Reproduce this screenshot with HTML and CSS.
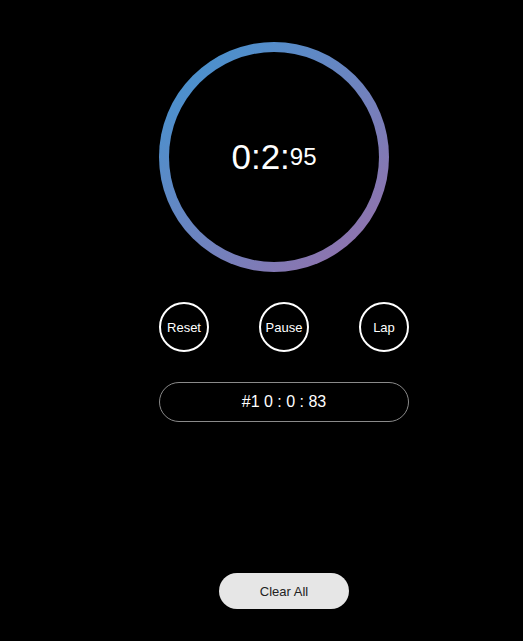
FILE: index.html
```html
<!DOCTYPE html>
<html>
<head>
<meta charset="utf-8">
<link rel="stylesheet" href="styles.css">
</head>
<body>
<div class="app">
  <div class="ring">
    <div class="dial">
      <span class="main">0:2:</span><span class="ms">95</span>
    </div>
  </div>
  <div class="controls">
    <button class="round">Reset</button>
    <button class="round">Pause</button>
    <button class="round">Lap</button>
  </div>
  <ul class="laps">
    <li class="lap">#1 0 : 0 : 83</li>
  </ul>
  <div class="footer">
    <button class="clear">Clear All</button>
  </div>
</div>
</body>
</html>
```
FILE: styles.css
```css
html, body {
  margin: 0;
  padding: 0;
  background: #000;
  height: 100%;
}
body {
  font-family: "Liberation Sans", Arial, sans-serif;
  color: #fff;
}
.app {
  width: 250px;
  margin-left: 159px;
  padding-top: 42px;
  display: flex;
  flex-direction: column;
}
.ring {
  width: 230px;
  height: 230px;
  border-radius: 50%;
  background: linear-gradient(135deg, #3f95d2 0%, #6b84c0 50%, #9a6ea8 100%);
  padding: 10px;
  box-sizing: border-box;
}
.dial {
  width: 100%;
  height: 100%;
  border-radius: 50%;
  background: #000;
  display: flex;
  align-items: center;
  justify-content: center;
  box-sizing: border-box;
}
.main {
  font-size: 35px;
}
.ms {
  font-size: 24px;
}
.controls {
  display: flex;
  justify-content: space-between;
  margin-top: 30px;
}
.round {
  width: 50px;
  height: 50px;
  border-radius: 50%;
  border: 2px solid #fff;
  background: transparent;
  color: #fff;
  font-family: "Liberation Sans", Arial, sans-serif;
  font-size: 13px;
  padding: 0;
}
.laps {
  list-style: none;
  margin: 30px 0 0;
  padding: 0;
}
.lap {
  height: 40px;
  box-sizing: border-box;
  border: 1px solid #8a8a8a;
  border-radius: 20px;
  display: flex;
  align-items: center;
  justify-content: center;
  font-size: 16px;
  color: #fff;
}
.footer {
  display: flex;
  justify-content: center;
  margin-top: 151px;
}
.clear {
  width: 130px;
  height: 36px;
  border-radius: 18px;
  border: none;
  background: #e6e6e6;
  color: #222;
  font-family: "Liberation Sans", Arial, sans-serif;
  font-size: 13px;
}
```
